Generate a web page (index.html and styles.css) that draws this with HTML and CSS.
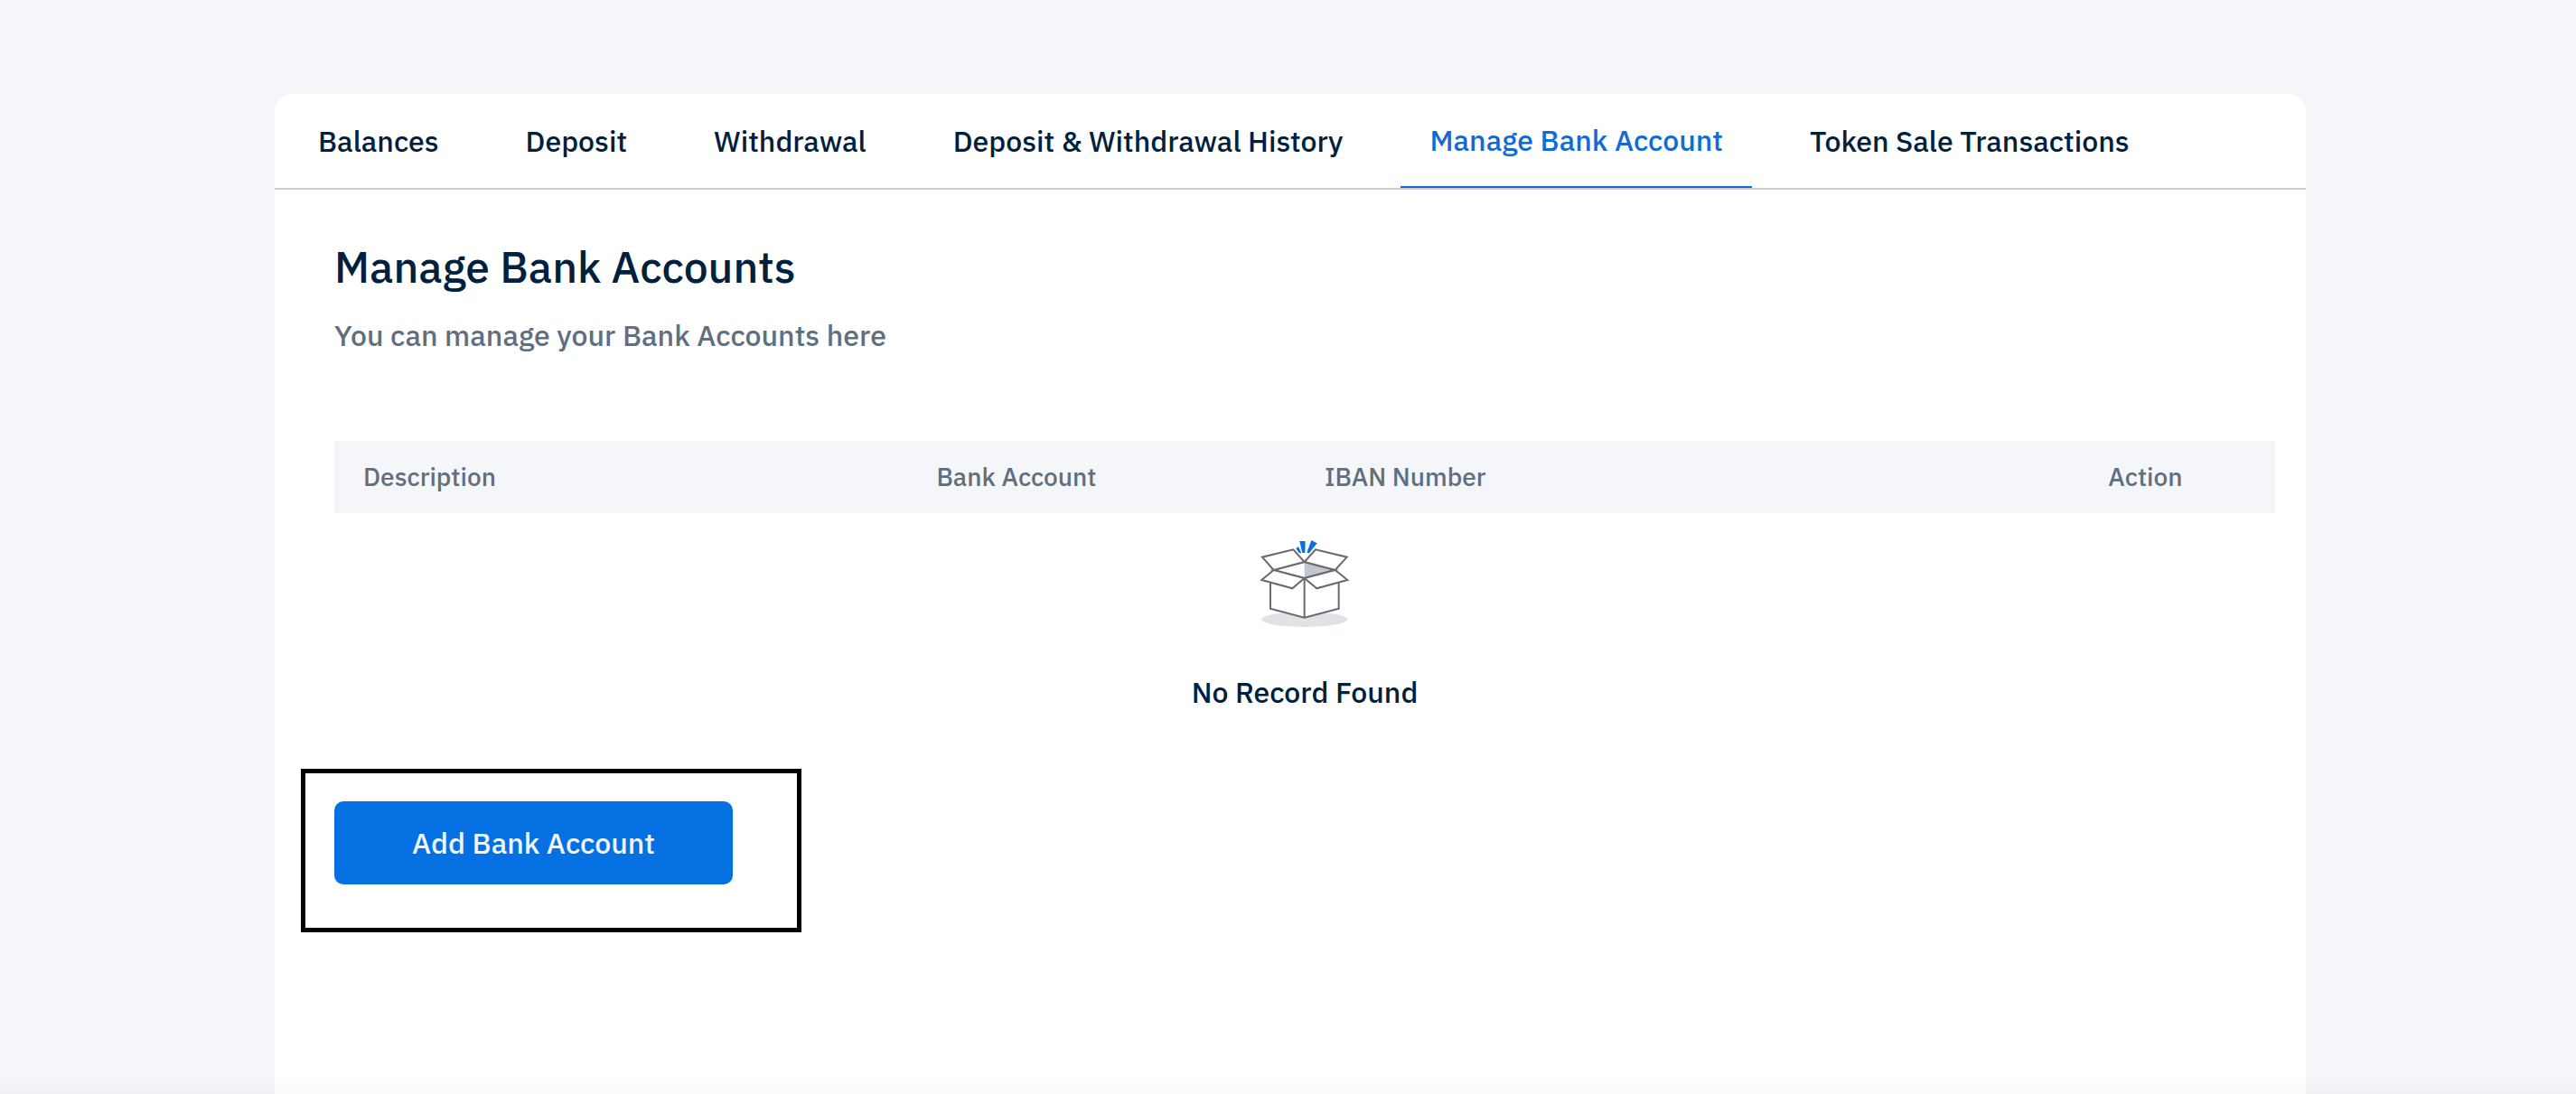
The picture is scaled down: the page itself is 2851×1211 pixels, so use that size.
FILE: index.html
```html
<!DOCTYPE html>
<html lang="en">
<head>
  <meta charset="UTF-8">
  <meta name="viewport" content="width=device-width, initial-scale=1">
  <title>Manage Bank Accounts</title>
  <link rel="stylesheet" href="styles.css">
</head>

<body>

  <main class="card">
    <nav class="tabs">
      <a class="tab" href="#balances">Balances</a>
      <a class="tab" href="#deposit">Deposit</a>
      <a class="tab" href="#withdrawal">Withdrawal</a>
      <a class="tab" href="#history">Deposit &amp; Withdrawal History</a>
      <a class="tab active" href="#bank-account" aria-current="page">Manage Bank Account</a>
      <a class="tab" href="#token-sale">Token Sale Transactions</a>
    </nav>

    <section class="content">
      <h1>Manage Bank Accounts</h1>
      <p class="subtitle">You can manage your Bank Accounts here</p>

      <table class="accounts">
        <thead>
          <tr>
            <th class="col-description">Description</th>
            <th class="col-bank">Bank Account</th>
            <th class="col-iban">IBAN Number</th>
            <th class="col-action">Action</th>
          </tr>
        </thead>
        <tbody>
          <tr>
            <td class="empty" colspan="4">
              <svg class="empty-icon" viewBox="-3 0 450 390" aria-hidden="true">
                <ellipse cx="221" cy="317" rx="143" ry="25" fill="#dfe2e7"/>
                <path fill="#fff" d="M108 190V281L221 311L335 281V190L221 180Z"/>
                <path fill="#c0c5cf" d="M221 126L323 153L221 180Z"/>
                <g fill="none" stroke="#6a6a6a" stroke-width="6" stroke-linejoin="miter">
                  <path d="M108 196V281L221 311L335 281V196M221 180V311"/>
                  <path d="M119 153L221 126L323 153L221 180Z"/>
                  <path fill="#fff" d="M119 153L81 110L184 85L221 126Z"/>
                  <path fill="#fff" d="M323 153L362 110L258 85L221 126Z"/>
                  <path fill="#fff" d="M119 153L79 186L181 214L221 180Z"/>
                  <path fill="#fff" d="M323 153L364 186L262 214L221 180Z"/>
                </g>
                <g fill="#0570e2">
                  <path d="M193 82L201 75L211 97H204Z"/>
                  <path d="M205 57H224L223 96H214Z"/>
                  <path d="M244 54L263 64L237 97L229 95Z"/>
                </g>
              </svg>
              <p class="empty-text">No Record Found</p>
            </td>
          </tr>
        </tbody>
      </table>

      <div class="highlight">
        <button class="btn" type="button">Add Bank Account</button>
      </div>
    </section>
  </main>

</body>
</html>
```
FILE: styles.css
```css
* { margin: 0; padding: 0; box-sizing: border-box; }

body {
  font-family: "IBM Plex Sans", Roboto, sans-serif;
  font-size: 32px;
  font-weight: 500;
  line-height: 40px;
  color: #00213d;
  background: #f4f6fa;
  min-height: 100vh;
  padding: 104px 299px 0 304px;
  display: flex;
  flex-direction: column;
}

/* soft shade along the bottom edge of the window */
body::after {
  content: "";
  position: fixed;
  left: 0;
  right: 0;
  bottom: 0;
  height: 18px;
  background: linear-gradient(rgba(0, 0, 0, 0), rgba(0, 0, 0, 0.02));
  pointer-events: none;
}

.card {
  flex: 1;
  background: #fff;
  border-radius: 20px 20px 0 0;
}

.tabs {
  display: flex;
  gap: 32px;
  padding: 0 16px;
  border-bottom: 2px solid #ccc;
}

.tab {
  padding: 32px;
  color: #00213d;
  text-decoration: none;
  white-space: nowrap;
}

.tab.active {
  padding: 31px 32px;
  color: #126ad4;
  border-bottom: 2px solid #126ad4;
}

.content {
  padding: 53px 34px 64px 66px;
}

h1 {
  font-size: 48px;
  font-weight: 500;
  line-height: 64px;
}

.subtitle {
  margin-top: 24px;
  color: #5f6f80;
}

.accounts {
  width: 100%;
  margin-top: 97px;
  border-collapse: collapse;
  table-layout: fixed;
}

th {
  height: 80px;
  padding: 0 22px;
  background: #f4f6fa;
  color: #5f6f80;
  font-size: 28px;
  font-weight: 500;
  text-align: left;
}

.col-description { width: 30%; padding-left: 32px; }
.col-bank { width: 20%; }
.col-iban { width: 40%; }
.col-action { width: 10%; padding-left: 30px; }

.empty {
  padding-top: 12px;
  text-align: center;
}

.empty-icon {
  display: block;
  width: 150px;
  height: 130px;
  margin: 0 auto 36px;
}

/* frame round the button, hangs out to the left of the column */
.highlight {
  width: fit-content;
  margin: 65px 0 0 -37px;
  padding: 31px 71px 48px 32px;
  border: 5px solid #000;
}

.btn {
  display: block;
  padding: 26px 86px;
  border: none;
  border-radius: 10px;
  background: #0570e2;
  color: #eef6ff;
  font: inherit;
  cursor: pointer;
}
```
